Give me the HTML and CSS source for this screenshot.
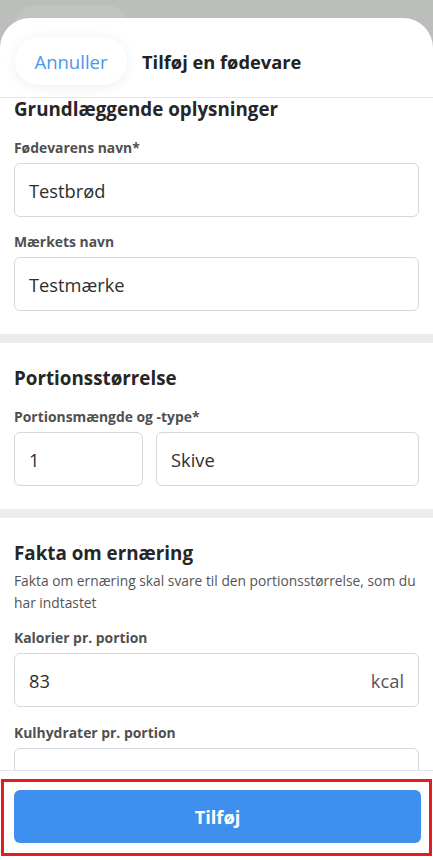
FILE: index.html
```html
<!DOCTYPE html>
<html lang="da">
<head>
  <meta charset="UTF-8" />
  <title>Tilføj en fødevare</title>
  <link rel="stylesheet" href="styles.css">
</head>
<body>
  <div class="backdrop">
    <div class="ghost-pill"></div>
  </div>

  <div class="sheet">
    <div class="sheet-header">
      <button class="cancel-btn">Annuller</button>
      <div class="sheet-title">Tilføj en fødevare</div>
    </div>

    <div class="scroll-area">
      <div class="section first">
        <h2 class="section-title">Grundlæggende oplysninger</h2>
        <div class="field">
          <div class="field-label">Fødevarens navn*</div>
          <div class="input">Testbrød</div>
        </div>
        <div class="field">
          <div class="field-label">Mærkets navn</div>
          <div class="input">Testmærke</div>
        </div>
      </div>

      <div class="divider"></div>

      <div class="section">
        <h2 class="section-title">Portionsstørrelse</h2>
        <div class="field">
          <div class="field-label">Portionsmængde og -type*</div>
          <div class="input-row">
            <div class="input small">1</div>
            <div class="input grow">Skive</div>
          </div>
        </div>
      </div>

      <div class="divider"></div>

      <div class="section">
        <h2 class="section-title">Fakta om ernæring</h2>
        <p class="section-desc">Fakta om ernæring skal svare til den portionsstørrelse, som du har indtastet</p>
        <div class="field">
          <div class="field-label">Kalorier pr. portion</div>
          <div class="input">83<span class="unit">kcal</span></div>
        </div>
        <div class="field carbs">
          <div class="field-label">Kulhydrater pr. portion</div>
          <div class="input">15.5<span class="unit">g</span></div>
        </div>
      </div>
    </div>

    <div class="footer">
      <div class="highlight">
        <button class="add-btn">Tilføj</button>
      </div>
    </div>
  </div>
</body>
</html>
```

FILE: styles.css
```css
html, body {
  margin: 0;
  padding: 0;
}
body {
  font-family: "Open Sans", "Noto Sans", sans-serif;
  background: #bcbebb;
  width: 433px;
  height: 860px;
  overflow: hidden;
  display: flex;
  flex-direction: column;
  color: #2a2a2a;
}
.backdrop {
  height: 18px;
  position: relative;
  flex-shrink: 0;
}
.ghost-pill {
  position: absolute;
  left: 15px;
  top: 5px;
  width: 112px;
  height: 40px;
  border-radius: 20px;
  background: rgba(255,255,255,0.08);
}
.sheet {
  flex: 1;
  min-height: 0;
  background: white;
  border-radius: 30px 30px 0 0;
  display: flex;
  flex-direction: column;
  overflow: hidden;
}
.sheet-header {
  display: flex;
  align-items: center;
  gap: 15px;
  padding: 19px 15px 12px 15px;
  border-bottom: 1px solid #e6e6e6;
}
.cancel-btn {
  font-family: inherit;
  width: 112px;
  height: 48px;
  border: none;
  border-radius: 24px;
  background: white;
  box-shadow: 0 2px 14px rgba(0,0,0,0.07);
  color: #4a97ee;
  font-size: 18.5px;
  padding: 0;
}
.sheet-title {
  font-size: 18.3px;
  font-weight: bold;
  color: #222;
}
.scroll-area {
  flex: 1;
  min-height: 0;
}
.section {
  padding: 24px 14px 7px 14px;
}
.section.first {
  padding-top: 0;
}
.section-title {
  font-size: 18.8px;
  line-height: 22px;
  margin: 0 0 19px 0;
  color: #262626;
}
.section-desc {
  font-size: 13.8px;
  line-height: 22px;
  color: #555;
  margin: -13px 0 15px 0;
}
.field {
  margin-bottom: 16px;
}
.field.carbs {
  margin-top: 17px;
}
.field-label {
  font-size: 13.9px;
  line-height: 18px;
  font-weight: bold;
  color: #505050;
  margin-bottom: 6px;
}
.input {
  height: 54px;
  box-sizing: border-box;
  border: 1px solid #d4d7dd;
  border-radius: 6px;
  padding: 0 14px;
  display: flex;
  align-items: center;
  font-size: 18.3px;
  color: #2e2e2e;
}
.unit {
  margin-left: auto;
  color: #555;
}
.input-row {
  display: flex;
  gap: 13px;
}
.input.small {
  width: 129px;
}
.input.grow {
  flex: 1;
}
.divider {
  height: 9px;
  background: #ececec;
}
.footer {
  position: relative;
  z-index: 1;
  border-top: 1px solid #e4e4e4;
  background: white;
  padding: 8px 1px 4px 1px;
}
.highlight {
  border: 3px solid #e51a1f;
  padding: 8px 8px 10px 10px;
}
.add-btn {
  font-family: inherit;
  width: 100%;
  height: 53px;
  border: none;
  border-radius: 6px;
  background: #3e8fee;
  color: white;
  font-size: 18.3px;
  font-weight: bold;
}
```
